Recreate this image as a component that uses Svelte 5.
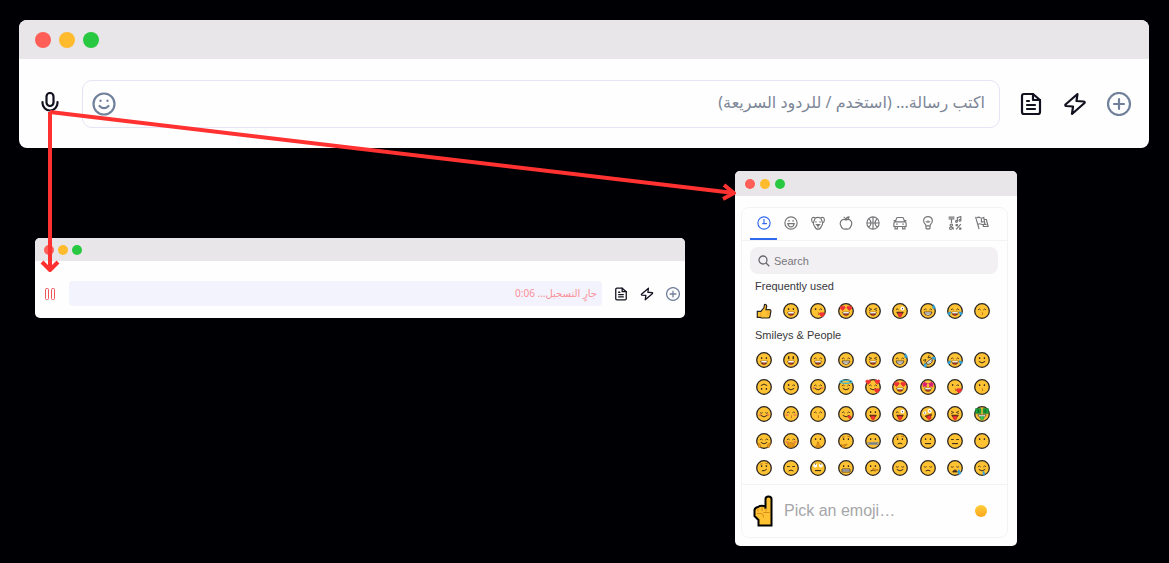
<script>
  let activeTab = 0
  let message = ''
  let search = ''

  const ink = '#3a2c1c'
  const red = '#ee3434'
  const blue = '#2fa3d8'

  // every part is a list of [path, fill, stroke, stroke width]
  const heart = (x, y) =>
    `M${x} ${y + 2}l-2.2-2.3a1.3 1.3 0 0 1 2.2-1.4a1.3 1.3 0 0 1 2.2 1.4z`

  const parts = {
    // eyes
    dots: [['M5.6 5.2v1.7M10.4 5.2v1.7', 'none', ink, 1.3]],
    tall: [['M5.7 4.2v3M10.3 4.2v3', 'none', ink, 1.4]],
    happy: [['M3.9 7q1.4-2.2 2.8 0M9.3 7q1.4-2.2 2.8 0', 'none', ink, 0.8]],
    shut: [['M3.9 6.6q1.4 1.3 2.8 0M9.3 6.6q1.4 1.3 2.8 0', 'none', ink, 0.8]],
    flat: [['M4 6.5h2.8M9.2 6.5h2.8', 'none', ink, 0.9]],
    squint: [['M4 5.1l2.7 1.3l-2.7 1.2M12 5.1l-2.7 1.3l2.7 1.2', 'none', ink, 0.8]],
    wink: [
      ['M5.6 5.2v1.7', 'none', ink, 1.4],
      ['M9.4 6.6q1.3-1.4 2.6 0', 'none', ink, 0.9]
    ],
    hearts: [[heart(4.6, 5.5) + heart(11.4, 5.5), red, red, 1]],
    stars: [
      [
        'M4.8 2.8l.8 1.6l1.8.2l-1.3 1.3l.3 1.9l-1.6-.9l-1.7.9l.3-1.9l-1.2-1.3l1.8-.2zM11.2 2.8l.8 1.6l1.8.2l-1.3 1.3l.3 1.9l-1.6-.9l-1.7.9l.3-1.9l-1.2-1.3l1.8-.2z',
        '#d81b79',
        '#d81b79',
        0.8
      ]
    ],
    zany: [
      ['M8.5 5.6a2 2 0 1 0 4 0a2 2 0 1 0-4 0', '#fff', 'none', 0],
      ['M10.2 5.7h.8', 'none', ink, 1.2],
      ['M3.9 6.6q1.3-1.5 2.6 0', 'none', ink, 0.9]
    ],
    wild: [
      ['M8.4 5.6a2.1 2.1 0 1 0 4.2 0a2.1 2.1 0 1 0-4.2 0M3.6 6a1.6 1.6 0 1 0 3.2 0a1.6 1.6 0 1 0-3.2 0', '#fff', 'none', 0],
      ['M10.2 5.7h.8M4.9 6h.7', 'none', ink, 1.2]
    ],
    roll: [
      ['M3.2 5.4a2 2 0 1 0 4 0a2 2 0 1 0-4 0M8.8 5.4a2 2 0 1 0 4 0a2 2 0 1 0-4 0', '#fff', 'none', 0],
      ['M4.9 4.2h.8M10.4 4.2h.8', 'none', ink, 1.2]
    ],
    money: [
      ['M1.6 2.6h5.4v5h-5.4zM9 2.6h5.4v5h-5.4z', '#1fa83f', '#16802e', 0.6],
      ['M5.4 3.9h-1.6v1.2h1.2v1.2h-1.6M12.4 3.9h-1.6v1.2h1.2v1.2h-1.6', 'none', '#0b5a22', 0.8]
    ],
    // mouths
    open: [
      ['M4.6 9h6.8q-.4 3.600-3.400 3.600t-3.400-3.600z', '#6d3512', ink, 0.4],
      ['M5.2 9.1h5.6v1.300h-5.6z', '#fff', 'none', 0],
      ['M6.200 12q1.800-1.300 3.600 0q-1.800.9-3.600 0z', red, 'none', 0]
    ],
    teeth: [
      ['M4 9h8q-.5 3.400-4 3.400t-4-3.400z', '#fff', ink, 0.8],
      ['M4.6 10.600h6.800', 'none', ink, 0.4]
    ],
    smile: [['M4.800 9.4q3.200 3 6.400 0', 'none', ink, 1]],
    smirk: [['M5.8 10.8q3.4.4 5-1.8', 'none', ink, 1]],
    line: [['M5 10.6h6', 'none', ink, 1.1]],
    frown: [['M5.6 11q2.4-1.8 4.8 0', 'none', ink, 1]],
    kiss: [['M7.8 9.4q1.6.6.2 1.2q1.6.6-.1 1.3', 'none', '#a85b16', 0.8]],
    tongue: [
      ['M4.6 9h6.8q-.6 2.800-3.400 2.800t-3.400-2.800z', '#6d3512', ink, 0.5],
      ['M6.2 10h3.6v2.8q-1.8 2.4-3.6 0z', red, '#c52222', 0.4]
    ],
    greenTongue: [
      ['M3.9 8.8h8.2q-.6 3-4.1 3t-4.1-3z', '#fff', ink, 0.7],
      ['M6.2 10.2h3.6v2.8q-1.8 2.2-3.6 0z', '#3ac556', '#16802e', 0.4]
    ],
    grimace: [
      ['M4 9h8v3h-8z', '#fff', ink, 0.8],
      ['M4 10.5h8M6 9v3M8 9v3M10 9v3', 'none', ink, 0.4]
    ],
    zip: [
      ['M2.800 9.4h10.400v2.200h-10.400z', '#b4bcc1', '#6c7478', 0.6],
      ['M4 10.5h8', 'none', '#555', 0.6]
    ],
    wail: [['M5.6 12q2.4-4.2 4.8 0z', '#5c2f14', ink, 0.8]],
    // extras
    sweat: [['M13.4 1.2q2.2 3 1.8 4q-.8 1.6-2.4.2q-.8-1 .6-4.2z', blue, '#1c7fae', 0.3]],
    tears: [['M3.9 8.2q-3.4.6-3.2 3q1 2 2.6.4q.8-1 .6-3.4zM12.1 8.2q3.4.6 3.2 3q-1 2-2.6.4q-.8-1-.6-3.4z', blue, 'none', 0]],
    tear: [['M11.6 9q2.8 3 2.4 4.4q-1.2 1.8-3.2.4q-.9-1.6.8-4.8z', blue, 'none', 0]],
    drool: [['M9.6 10.4q1.8 2.600 1.2 4.200q-.9 1-2 0q-.5-2 .8-4.200z', blue, 'none', 0]],
    blush: [['M2.4 9a1.6 1.1 0 1 0 3.2 0a1.6 1.1 0 1 0-3.2 0M10.4 9a1.6 1.1 0 1 0 3.2 0a1.6 1.1 0 1 0-3.2 0', '#f4814c', 'none', 0]],
    love: [[heart(12, 12), red, red, 1]],
    inLove: [[heart(3.2, 3.4) + heart(12.4, 3.2) + heart(12, 12), red, red, 0.8]],
    lick: [['M9.4 10.4l2.6-.8q2.2 1.4.8 3q-1.6.8-3.4-2.2z', red, '#c52222', 0.4]],
    halo: [['M2 2.8a6 1.5 0 1 0 12 0a6 1.5 0 1 0-12 0', 'none', '#37b6d6', 1.3]],
    hands: [['M1.4 10.4q2.2-.4 3.4 1.8l-.4 2.4h-1.600zM14.6 10.4q-2.2-.4-3.4 1.8l.4 2.4h1.600z', '#e8961a', '#a8690f', 0.5]],
    palm: [['M4.4 10.2q4-1.6 7 .2l-.4 3.2q-3 1.6-5.8.4z', '#e8961a', '#a8690f', 0.5]],
    finger: [['M7.3 9h1.5v2.600l1.6 1v1.800h-4.4l-.2-1.600l1.5-1.2z', '#e8961a', '#a8690f', 0.5]],
    chin: [['M3 11.2l1.2 1l4.6-1.2l.4.9l-3 1.2l.4 1.600h-2z', '#e8961a', '#a8690f', 0.5]],
    brow: [['M4 4.2l2.8-.4M9.2 3.2l2.8.6', 'none', '#a8690f', 0.8]],
    nose: [['M7.8 8.4l5.6 1.6l-5.4.6z', '#f5a623', '#a8690f', 0.6]]
  }

  const emoji = (label, list, turn = 0) => ({ label, shapes: list.split(' ').flatMap((k) => parts[k] || []), turn })

  const thumb = { label: 'thumbs up', thumb: true }
  const grinning = emoji('grinning', 'dots open')
  const loveKiss = emoji('blowing a kiss', 'wink kiss love')
  const heartEyes = emoji('heart eyes', 'hearts open')
  const laughing = emoji('laughing', 'squint open')
  const winkTongue = emoji('winking tongue', 'zany tongue')
  const sweatSmile = emoji('sweat smile', 'happy teeth sweat')
  const joy = emoji('joy', 'happy open tears')
  const kissSmile = emoji('kissing smiling', 'happy kiss')

  const groups = [
    {
      name: 'Frequently used',
      items: [thumb, grinning, loveKiss, heartEyes, laughing, winkTongue, sweatSmile, joy, kissSmile]
    },
    {
      name: 'Smileys & People',
      items: [
        grinning,
        emoji('smiley', 'tall open'),
        emoji('smile', 'happy open'),
        emoji('beaming', 'happy teeth'),
        laughing,
        sweatSmile,
        emoji('rolling on the floor', 'squint teeth tears', -40),
        joy,
        emoji('slight smile', 'dots smile'),

        emoji('upside down', 'dots smile', 180),
        emoji('wink', 'wink smile'),
        emoji('blush', 'happy blush smile'),
        emoji('halo', 'happy smile halo'),
        emoji('smiling with hearts', 'happy smile inLove'),
        heartEyes,
        emoji('star struck', 'stars open'),
        loveKiss,
        emoji('kissing', 'dots kiss'),

        emoji('relaxed', 'shut blush smile'),
        emoji('kissing closed eyes', 'happy blush kiss'),
        kissSmile,
        emoji('yum', 'happy smile lick'),
        emoji('tongue', 'dots tongue'),
        winkTongue,
        emoji('zany', 'wild tongue', -18),
        emoji('squinting tongue', 'squint tongue'),
        emoji('money mouth', 'money greenTongue'),

        emoji('hugging', 'happy smile hands'),
        emoji('hand over mouth', 'happy blush palm'),
        emoji('shushing', 'dots finger'),
        emoji('thinking', 'brow dots chin'),
        emoji('zipper mouth', 'dots zip'),
        emoji('raised eyebrow', 'brow dots frown'),
        emoji('neutral', 'dots line'),
        emoji('expressionless', 'flat line'),
        emoji('no mouth', 'dots'),

        emoji('smirk', 'brow dots smirk'),
        emoji('unamused', 'flat frown'),
        emoji('rolling eyes', 'roll line'),
        emoji('grimacing', 'dots grimace'),
        emoji('lying', 'dots frown nose'),
        emoji('relieved', 'shut smile'),
        emoji('pensive', 'shut frown'),
        emoji('sleepy', 'shut wail tear'),
        emoji('drooling', 'happy smile drool')
      ]
    }
  ]

  const tabs = [
    { name: 'Recent', d: 'M12 1.5a10.5 10.5 0 1 0 0 21a10.5 10.5 0 1 0 0-21M12 5v9M9 13h8' },
    {
      name: 'Smileys',
      d: 'M12 1.5a10.5 10.5 0 1 0 0 21a10.5 10.5 0 1 0 0-21M8.5 7v3M15.5 7v3M6.5 13h11q-1 5.500-5.5 5.500t-5.5-5.500z'
    },
    {
      name: 'Animals',
      d: 'M7 3q-5-2.5-6 3q0 5 3 6l3-8q5-3 10 0l3 8q3-1 3-6q-1-5.5-6-3M4 12q0 4 2.5 6q1 4.5 5.5 4.500t5.500-4.500q2.500-2 2.500-6M8.500 9v2.500M15.500 9v2.500M9.500 14.500h5l-2.500 2.500zM12 17v3'
    },
    {
      name: 'Food',
      d: 'M12 7q-4-2.500-7 0q-4 3-2.500 8q1.500 5 4.500 7q2 1 5 0q3 1 5 0q3-2 4.500-7q1.500-5-2.500-8q-3-2.500-7 0zM12 7q0-3-4-5.500M12 6q1-4.500 5-4.500q0 4-5 5'
    },
    {
      name: 'Activity',
      d: 'M12 1.500a10.500 10.500 0 1 0 0 21a10.500 10.500 0 1 0 0-21M12 1.500v21M1.500 12h21M5 4.500q7 7.500 0 15M19 4.500q-7 7.500 0 15'
    },
    {
      name: 'Travel',
      d: 'M4 10l2-6q.5-1.500 2-1.500h8q1.500 0 2 1.500l2 6M3.500 10h17q2 0 2 3v5h-21v-5q0-3 2-3zM3.500 18v4h4v-4M16.500 18v4h4v-4M5.500 14h2.500M16 14h2.500M1 8h3M20 8h3'
    },
    {
      name: 'Objects',
      d: 'M8.500 17q0-2-2-4q-2-2-2-5a7.500 7 0 0 1 15 0q0 3-2 5q-2 2-2 4zM8.500 17v4q3.500 3 7 0v-4M8.500 9q2 3 3.500 0q1.500 3 3.500 0'
    },
    {
      name: 'Symbols',
      d: 'M1 2h10M1 5h10M6 5v7M16 9v-6l6-2v6M13 9.500a1.500 1.500 0 1 0 3 0a1.500 1.500 0 1 0-3 0M19 7.500a1.500 1.500 0 1 0 3 0a1.500 1.500 0 1 0-3 0M10 23l-6-6q-1-3 2-3t1 3l-4 3q-1 3 2 3q3 0 4-4M22 14l-8 9M14 14.500h2v2h-2zM20 20.500h2v2h-2z'
    },
    { name: 'Flags', d: 'M1 1.500l6 21M3 3q3-2 6 0q3 1.500 6-.5l2 11q-3 2-6 .5q-3-1.500-5.500 0M16 6h3.500l3 12h-8l-.5-4M11 5v5h4M15 14l5 1' }
  ]
</script>

{#snippet bar()}
  <div class="bar">
    <i class="light close"></i>
    <i class="light minimize"></i>
    <i class="light zoom"></i>
  </div>
{/snippet}

{#snippet actions()}
  <button class="icon" aria-label="Templates">
    <svg viewBox="0 0 24 24">
      <path d="M14 2H5a2 2 0 0 0-2 2v16a2 2 0 0 0 2 2h14a2 2 0 0 0 2-2V8z" />
      <path d="M14 2v6h7M8 9h2M8 13h8M8 17h8" />
    </svg>
  </button>
  <button class="icon" aria-label="Quick replies">
    <svg viewBox="0 0 24 24">
      <path d="M14.500 2L2.500 12.500q-.7 1 .8 1.500l6.700.5L9 22L21.500 11q.7-1-.8-1.500L13.500 9z" />
    </svg>
  </button>
  <button class="icon plus" aria-label="Add">
    <svg viewBox="0 0 24 24">
      <circle cx="12" cy="12" r="11" />
      <path d="M12 7v10M7 12h10" />
    </svg>
  </button>
{/snippet}

<main>
  <section class="window composer">
    {@render bar()}
    <div class="body">
      <button class="icon mic" aria-label="Record">
        <svg viewBox="0 0 24 24">
          <rect x="8.5" y="1" width="7" height="13" rx="3.5" />
          <path d="M4.500 10v1a7.500 7.500 0 0 0 15 0v-1" />
        </svg>
      </button>
      <div class="field">
        <button class="icon smile" aria-label="Emoji">
          <svg viewBox="0 0 24 24">
            <circle cx="12" cy="12" r="10.500" />
            <path d="M7.500 14q4.500 4.500 9 0M8.500 8.500v.5M15.500 8.500v.5" />
          </svg>
        </button>
        <input
          dir="rtl"
          type="text"
          aria-label="رسالة"
          placeholder="اكتب رسالة... (استخدم / للردود السريعة)"
          bind:value={message}
        />
      </div>
      <div class="actions">{@render actions()}</div>
    </div>
  </section>

  <div class="row">
    <section class="window recorder">
      {@render bar()}
      <div class="body">
        <button class="icon pause" aria-label="Pause">
          <svg viewBox="0 0 12 12">
            <rect x="1.5" y="0.5" width="3" height="11" rx="1" />
            <rect x="7.5" y="0.5" width="3" height="11" rx="1" />
          </svg>
        </button>
        <p class="status" dir="rtl">جارٍ التسجيل... 0:06</p>
        <div class="actions">{@render actions()}</div>
      </div>
    </section>

    <section class="window emojis">
      {@render bar()}
      <div class="picker">
        <nav class="tabs">
          {#each tabs as tab, i}
            <button class:active={activeTab === i} aria-label={tab.name} on:click={() => (activeTab = i)}>
              <svg viewBox="0 0 24 24"><path d={tab.d} /></svg>
            </button>
          {/each}
        </nav>
        <label class="search">
          <svg viewBox="0 0 12 12">
            <circle cx="5" cy="5" r="4" />
            <path d="M8 8l3.300 3.300" />
          </svg>
          <input type="text" aria-label="Search" placeholder="Search" bind:value={search} />
        </label>
        {#each groups as group}
          <h2>{group.name}</h2>
          <div class="grid">
            {#each group.items as item}
              <button aria-label={item.label}>
                <svg viewBox="0 0 16 16">
                  {#if item.thumb}
                    <path
                      d="M1.300 8.400h3.600l3-3.600l.6-3.200q2-.6 2.200 1.600l-.7 3.400h3.600q1.600.4 1.200 1.900l-.8 5q-.4 1.500-2 1.500H5.200l-.8-.7H1.300z"
                      fill="#ffc233"
                      stroke="#2b2520"
                      stroke-width="1.200"
                    />
                    <path d="M4.900 9v5M10.800 9h3.200M10.800 11h3" fill="none" stroke="#e0982a" stroke-width="0.700" />
                  {:else}
                    <g transform="rotate({item.turn} 8 8)">
                      <circle cx="8" cy="8" r="7.300" fill="#ffc233" stroke="#2b2520" stroke-width="1.300" />
                      {#each item.shapes as [d, fill, stroke, width]}
                        <path {d} {fill} {stroke} stroke-width={width} />
                      {/each}
                    </g>
                  {/if}
                </svg>
              </button>
            {/each}
          </div>
        {/each}
        <footer>
          <svg class="point" viewBox="0 0 20 32">
            <path
              d="M12.500 14V4q0-2.500 3-2.500T18.500 4v26.500H5.500V25L1.500 21v-6q.5-2.500 3.500-3q3-2 7.500-.5"
              fill="#ffc233"
              stroke="#000"
              stroke-width="2"
            />
            <path d="M9 12v4M13 13v3.500M5 13.500v3M4 18.500h4q3 .5 2.500 4M10.500 17.500h6" fill="none" stroke="#d98c1c" />
          </svg>
          <span>Pick an emoji…</span>
          <button class="tone" aria-label="Skin tone"></button>
        </footer>
      </div>
    </section>
  </div>

  <svg class="arrows" viewBox="0 0 760 300">
    <path d="M50 112V270M42 262L50 270L58 262" />
    <path d="M50 112L734 193M724 185L734 193L723 199" />
  </svg>
</main>

<style>
  :global(body) {
    margin: 0;
    background: #000004;
  }

  main {
    position: relative;
    padding: 20px 20px 17px 19px;
    font-family: 'Liberation Sans', Arial, sans-serif;
  }

  button {
    display: flex;
    align-items: center;
    justify-content: center;
    padding: 0;
    border: 0;
    background: none;
    cursor: pointer;
  }

  input {
    min-width: 0;
    flex: 1;
    padding: 0;
    border: 0;
    outline: 0;
    background: none;
    color: #1e2233;
  }

  svg {
    display: block;
    flex: none;
  }

  .window {
    border-radius: 5px;
    overflow: hidden;
    background: #fefefe;
  }

  .bar {
    display: flex;
    align-items: center;
    gap: 4px;
    background: #e9e6e9;
  }

  .light {
    width: 10px;
    height: 10px;
    border-radius: 50%;
  }

  .close {
    background: #ff5f57;
  }

  .minimize {
    background: #ffbb2e;
  }

  .zoom {
    background: #28c840;
  }

  .body,
  .field,
  .actions {
    display: flex;
    align-items: center;
  }

  .icon {
    color: #11111f;
  }

  .icon svg {
    width: 100%;
    fill: none;
    stroke: currentColor;
    stroke-width: 2.2;
    stroke-linecap: round;
    stroke-linejoin: round;
  }

  .icon.plus {
    color: #71809b;
  }

  .composer {
    border-radius: 8px;
  }

  .composer .bar {
    height: 39px;
    padding-left: 16px;
    gap: 8px;
  }

  .composer .light {
    width: 16px;
    height: 16px;
  }

  .composer .body {
    padding: 21px 18px 20px 19px;
  }

  .composer .icon {
    width: 24px;
  }

  .mic {
    margin-right: 20px;
  }

  .field {
    flex: 1;
    height: 46px;
    padding: 0 14px 0 9px;
    border: 1px solid #e4e4f5;
    border-radius: 10px;
  }

  .field .smile {
    color: #71809b;
  }

  .field input {
    height: 46px;
    padding-bottom: 4px;
    box-sizing: border-box;
    font-family: 'Noto Sans', 'DejaVu Sans', sans-serif;
    font-size: 16px;
  }

  .field input::placeholder {
    color: #7d8798;
    opacity: 1;
  }

  .composer .actions {
    margin-left: 19px;
    gap: 20px;
  }

  .row {
    display: flex;
    align-items: flex-start;
    gap: 50px;
    padding: 23px 132px 0 16px;
  }

  .recorder {
    flex: 1;
    margin-top: 67px;
  }

  .recorder .bar {
    height: 23px;
    padding-left: 9px;
  }

  .recorder .body {
    padding: 20px 5px 12px 9px;
  }

  .recorder .icon {
    width: 14px;
  }

  .recorder .pause {
    width: 12px;
    color: #f0555c;
  }

  .pause svg {
    stroke-width: 1;
  }

  .status {
    flex: 1;
    height: 25px;
    margin: 0 12px 0 13px;
    padding: 0 5px;
    border-radius: 4px;
    background: #f2f3fc;
    color: #fb8f98;
    font-family: 'Noto Sans', 'DejaVu Sans', sans-serif;
    font-size: 10px;
    line-height: 25px;
  }

  .recorder .actions {
    gap: 12px;
  }

  .emojis {
    width: 282px;
  }

  .emojis .bar {
    height: 25px;
    padding-left: 10px;
    gap: 5px;
  }

  .picker {
    margin: 11px 9px 8px 6px;
    border: 1px solid #f3f2f5;
    border-radius: 8px;
  }

  .tabs {
    display: grid;
    grid-template-columns: repeat(9, 1fr);
    padding: 0 11px 0 8px;
    border-bottom: 1px solid #f3f2f5;
  }

  .tabs button {
    height: 32px;
    border-bottom: 2px solid transparent;
    color: #757578;
  }

  .tabs .active {
    border-color: #3169ee;
    color: #3169ee;
  }

  .tabs svg {
    width: 14px;
    fill: none;
    stroke: currentColor;
    stroke-width: 2;
  }

  .search {
    display: flex;
    align-items: center;
    gap: 4px;
    height: 27px;
    margin: 6px 9px 1px 8px;
    padding: 0 8px;
    border-radius: 8px;
    background: #f2f0f3;
    box-sizing: border-box;
  }

  .search svg {
    width: 12px;
    fill: none;
    stroke: #68686c;
    stroke-width: 1.3;
  }

  .search input {
    font-family: inherit;
    font-size: 11px;
  }

  .search input::placeholder {
    color: #77777b;
    opacity: 1;
  }

  h2 {
    margin: 0;
    padding: 0 13px;
    color: #38383c;
    font-size: 11px;
    font-weight: 400;
    line-height: 22px;
  }

  .grid {
    display: grid;
    grid-template-columns: repeat(9, 1fr);
    grid-auto-rows: 27px;
    padding: 0 11px 0 8px;
  }

  .grid svg {
    width: 16px;
  }

  footer {
    display: flex;
    align-items: center;
    height: 52px;
    margin-top: 3px;
    padding: 0 20px 0 11px;
    border-top: 1px solid #f3f2f5;
    color: #a6a6a9;
    font-size: 16px;
  }

  .point {
    width: 20px;
    margin-right: 11px;
  }

  .tone {
    width: 12px;
    height: 12px;
    margin-left: auto;
    border-radius: 50%;
    background: linear-gradient(#ffce3a, #fba71b);
  }

  /* callout arrows run over the windows */
  .arrows {
    position: absolute;
    top: 0;
    left: 0;
    width: 760px;
    fill: none;
    stroke: #ff3131;
    stroke-width: 4;
    stroke-linejoin: round;
    pointer-events: none;
  }
</style>
